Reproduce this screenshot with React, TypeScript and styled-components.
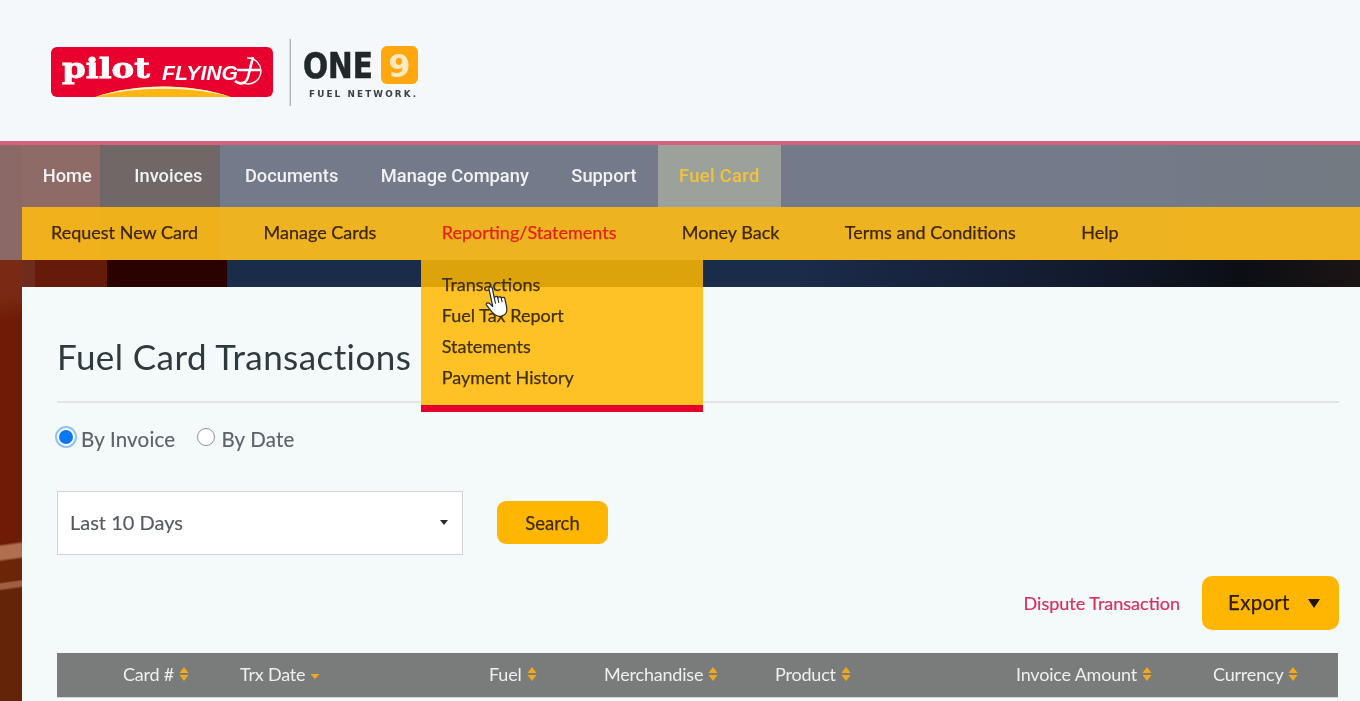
import React from "react";
import styled, { createGlobalStyle } from "styled-components";

const Global = createGlobalStyle`
  html, body { margin: 0; padding: 0; height: 701px; overflow: hidden; background: #f5f8fa; }
  * { box-sizing: border-box; }
  body { font-family: "Lato", "Noto Sans", sans-serif; }
`;

const Page = styled.div`
  width: 1360px;
  height: 701px;
  overflow: hidden;
  display: flex;
  flex-direction: column;
  filter: blur(0.55px);
`;

const Header = styled.header`
  height: 141px;
  flex: none;
  background: #f5f8fa;
  padding: 39px 0 0 51px;
`;

const Hero = styled.div`
  flex: 1;
  min-height: 0;
  border-top: 4px solid #d5617a;
  display: flex;
  flex-direction: column;
  background-color: #6e1e08;
  background-image:
    linear-gradient(172deg, #7a2a14 0 8%, #6e1c06 14% 64%, #b0704f 64.6% 67.4%, #6d2508 68% 72.6%, #a06040 73% 74%, #642408 74.6%),
    linear-gradient(90deg,
      #6e2c1c 0 35px, #651a0a 35px 107px, #2a0300 107px 227px, #1b2b4a 227px 800px,
      #12192c 1100px, #0b0e14 1240px, #1c1414 1360px),
    linear-gradient(90deg,
      #4a0600 0 22px, #550a04 22px 100px, #130002 100px 220px, #1a2a4a 220px 1100px, #1c2837 1360px);
  background-size: 22px 441px, 100% 27px, 100% 115px;
  background-position: 0 115px, 0 115px, 0 0;
  background-repeat: no-repeat;
`;

const NavGroup = styled.div`
  flex: none;
  background: rgba(197, 197, 197, 0.52);
`;

const MainNav = styled.nav`
  height: 62px;
  padding-left: 21.5px;
  display: flex;
`;

const MainItem = styled.a<{ $active?: boolean }>`
  display: flex;
  align-items: center;
  padding: 0 21.25px 1px;
  font-family: "Roboto", sans-serif;
  font-size: 18.3px;
  font-weight: 500;
  letter-spacing: ${(p) => (p.$active ? "0.35px" : "0")};
  color: ${(p) => (p.$active ? "#f2c33a" : "#f1f2f3")};
  background: ${(p) => (p.$active ? "rgba(190, 195, 170, 0.55)" : "transparent")};
`;

const SubNav = styled.nav`
  height: 53px;
  margin-left: 22px;
  padding-left: 29px;
  display: flex;
  background: rgba(255, 187, 17, 0.88);
`;

const SubItem = styled.a<{ $active?: boolean }>`
  position: relative;
  display: flex;
  align-items: center;
  margin-right: 65.4px;
  padding-bottom: 3px;
  font-size: 18px;
  -webkit-text-stroke: 0.25px currentColor;
  color: ${(p) => (p.$active ? "#e2231a" : "#3d2600")};
`;

const Dropdown = styled.div`
  position: absolute;
  top: 53px;
  left: -21px;
  width: 282px;
  height: 152px;
  padding: 9px 21px 0;
  background: rgba(255, 184, 0, 0.85);
  border-bottom: 7px solid #e4002b;
  z-index: 5;
`;

const DropItem = styled.div`
  height: 31px;
  line-height: 31px;
  font-size: 18px;
  color: #40300a;
  white-space: nowrap;
`;

const Cursor = styled.svg`
  position: absolute;
  left: 63px;
  top: 24px;
  transform: rotate(-12deg);
`;

const Card = styled.main`
  margin: 27px 0 0 22px;
  flex: 1;
  min-height: 0;
  background: #f4f9fa;
  padding: 50px 21px 0 35px;
`;

const Title = styled.h1`
  margin: 0;
  height: 66px;
  border-bottom: 2px solid #e1e5e5;
  font-size: 35px;
  line-height: 39px;
  font-weight: 400;
  letter-spacing: 0.42px;
  color: #2e3a3e;
`;

const RadioRow = styled.div`
  display: flex;
  align-items: center;
  gap: 22px;
  margin-top: 25px;
  height: 22px;
`;

const RadioLabel = styled.label`
  display: flex;
  align-items: center;
  gap: 6px;
  font-size: 20.5px;
  letter-spacing: 0.2px;
  color: #5c6469;
  -webkit-text-stroke: 0.15px currentColor;
`;

const Radio = styled.input.attrs({ type: "radio" })`
  appearance: none;
  width: 18px;
  height: 18px;
  margin: -4px 0 0;
  border-radius: 50%;
  border: 1px solid #8f9598;
  background: #fff;
  &:checked {
    border: 2px solid #fff;
    background: #0a78f5;
    box-shadow: 0 0 0 2px #8cc2fa;
  }
`;

const FormRow = styled.div`
  display: flex;
  align-items: center;
  gap: 34px;
  margin-top: 41px;
`;

const SelectBox = styled.div`
  width: 406px;
  height: 64px;
  padding: 0 14px 2px 12px;
  display: flex;
  align-items: center;
  justify-content: space-between;
  background: #fff;
  border: 1px solid #d2d5d5;
  font-size: 20px;
  color: #555c60;
  -webkit-text-stroke: 0.15px currentColor;
`;

const SelectArrow = styled.span`
  width: 0;
  height: 0;
  border-left: 4px solid transparent;
  border-right: 4px solid transparent;
  border-top: 5px solid #2b2b2b;
`;

const SearchButton = styled.button`
  width: 111px;
  height: 43px;
  margin-bottom: 2px;
  padding: 1px 0 0;
  border: 0;
  border-radius: 9px;
  background: #ffb600;
  font-family: inherit;
  font-size: 18.5px;
  color: #3f2c00;
  -webkit-text-stroke: 0.25px currentColor;
`;

const Actions = styled.div`
  display: flex;
  align-items: center;
  justify-content: flex-end;
  gap: 22px;
  margin-top: 21px;
`;

const DisputeLink = styled.a`
  font-size: 18px;
  color: #d8305c;
  -webkit-text-stroke: 0.2px currentColor;
`;

const ExportButton = styled.button`
  width: 137px;
  height: 54px;
  padding: 0 19px 3px 26px;
  display: flex;
  align-items: center;
  justify-content: space-between;
  border: 0;
  border-radius: 10px;
  background: #ffb600;
  font-family: inherit;
  font-size: 20.5px;
  letter-spacing: 0.3px;
  color: #2c1c00;
  -webkit-text-stroke: 0.25px currentColor;
`;

const ExportArrow = styled.span`
  width: 0;
  height: 0;
  margin-top: 4px;
  border-left: 6.5px solid transparent;
  border-right: 6.5px solid transparent;
  border-top: 9px solid #1d1400;
`;

const TableHead = styled.div`
  display: grid;
  grid-template-columns: 117px 249px 115px 171px 241px 197px 1fr;
  align-items: center;
  height: 45px;
  margin: 23px 1px 0 0;
  padding: 0 0 3px 66px;
  background: #7a7c7b;
  border-bottom: 1px solid #d6d8d8;
`;

const HeadCell = styled.div`
  display: flex;
  align-items: center;
  gap: 5px;
  font-size: 18px;
  letter-spacing: -0.2px;
  color: #eef0f0;
`;

const Sort = ({ only }: { only?: boolean }) => (
  <svg width="10" height="16" viewBox="0 0 10 16" aria-hidden="true">
    {!only && <path d="M5 1 L9.5 7 H0.5 Z" fill="#f3a81c" />}
    <path d={only ? "M0.5 8 H9.5 L5 13 Z" : "M0.5 9 H9.5 L5 15 Z"} fill="#f3a81c" />
  </svg>
);

const Logo = () => (
  <svg width="370" height="70" viewBox="0 0 370 70" aria-label="Pilot Flying J and One9 Fuel Network">
    <rect x="0" y="8" width="222" height="50" rx="6" fill="#e8002f" />
    <path d="M44 58 C85 44 140 44 180 58 Z" fill="#ffb612" />
    <path d="M44 58 C85 44 140 44 180 58 C140 47 85 47 44 58 Z" fill="#fff3d0" />
    <text x="11" y="39" fontFamily="DejaVu Serif" fontWeight="700" fontSize="27" fill="#fff" stroke="#fff" strokeWidth="0.8" textLength="88" lengthAdjust="spacingAndGlyphs">pilot</text>
    <text x="111" y="41" fontFamily="Liberation Sans" fontWeight="700" fontStyle="italic" fontSize="21" fill="#fff" textLength="76" lengthAdjust="spacingAndGlyphs">FLYING</text>
    <g fill="none" stroke="#fff">
      <path d="M196 19 A13 13 0 1 1 190 43" strokeWidth="1.4" />
      <path d="M186 31 H209 M202 18 L197 38 C195 45 189 46 184 42" strokeWidth="2.6" />
    </g>
    <rect x="238.5" y="0" width="1.5" height="67" fill="#b4b7b7" />
    <text x="252" y="39" fontFamily="DejaVu Sans" fontWeight="700" fontSize="35" fill="#20282a" stroke="#20282a" strokeWidth="0.6" textLength="70" lengthAdjust="spacingAndGlyphs">ONE</text>
    <rect x="330" y="7" width="37" height="38" rx="6" fill="#ffa70f" />
    <text x="348.5" y="38" textAnchor="middle" fontFamily="DejaVu Sans" fontWeight="700" fontSize="32" fill="#ffe9c0">9</text>
    <text x="258" y="58" fontFamily="DejaVu Sans" fontWeight="700" fontSize="8.8" fill="#3a4244" textLength="107">FUEL NETWORK.</text>
  </svg>
);

const mainItems = ["Home", "Invoices", "Documents", "Manage Company", "Support"];
const columns: [string, boolean?][] = [
  ["Card #"], ["Trx Date", true], ["Fuel"], ["Merchandise"], ["Product"], ["Invoice Amount"], ["Currency"],
];

export default function App() {
  return (
    <Page>
      <Global />
      <Header><Logo /></Header>
      <Hero>
        <NavGroup>
          <MainNav>
            {mainItems.map((t) => <MainItem key={t}>{t}</MainItem>)}
            <MainItem $active>Fuel Card</MainItem>
          </MainNav>
          <SubNav>
            <SubItem>Request New Card</SubItem>
            <SubItem>Manage Cards</SubItem>
            <SubItem $active>
              Reporting/Statements
              <Dropdown>
                <DropItem>Transactions</DropItem>
                <DropItem>Fuel Tax Report</DropItem>
                <DropItem>Statements</DropItem>
                <DropItem>Payment History</DropItem>
                <Cursor width="27" height="36" viewBox="0 0 24 32" aria-hidden="true">
                  <path d="M7 3 C7 1 10 1 10 3 L10 12 C10 10.6 13 10.6 13 12 L13 13 C13 11.6 16 11.6 16 13 L16 14 C16 12.6 19 12.6 19 14 L19 22 C19 26 17 29 13 29 C9 29 7 27 5 23 L2 17 C1 15 3.5 14 5 16 L7 19 Z"
                    fill="#fff" stroke="#2a2a2a" strokeWidth="1.1" strokeLinejoin="round" />
                  <path d="M10 12 V17 M13 13 V17 M16 14 V17" stroke="#2a2a2a" strokeWidth="1" fill="none" />
                </Cursor>
              </Dropdown>
            </SubItem>
            <SubItem>Money Back</SubItem>
            <SubItem>Terms and Conditions</SubItem>
            <SubItem>Help</SubItem>
          </SubNav>
        </NavGroup>
        <Card>
          <Title>Fuel Card Transactions</Title>
          <RadioRow>
            <RadioLabel><Radio name="mode" defaultChecked />By Invoice</RadioLabel>
            <RadioLabel><Radio name="mode" />By Date</RadioLabel>
          </RadioRow>
          <FormRow>
            <SelectBox>Last 10 Days<SelectArrow /></SelectBox>
            <SearchButton>Search</SearchButton>
          </FormRow>
          <Actions>
            <DisputeLink>Dispute Transaction</DisputeLink>
            <ExportButton>Export<ExportArrow /></ExportButton>
          </Actions>
          <TableHead>
            {columns.map(([t, only]) => (
              <HeadCell key={t}>{t}<Sort only={only} /></HeadCell>
            ))}
          </TableHead>
        </Card>
      </Hero>
    </Page>
  );
}
